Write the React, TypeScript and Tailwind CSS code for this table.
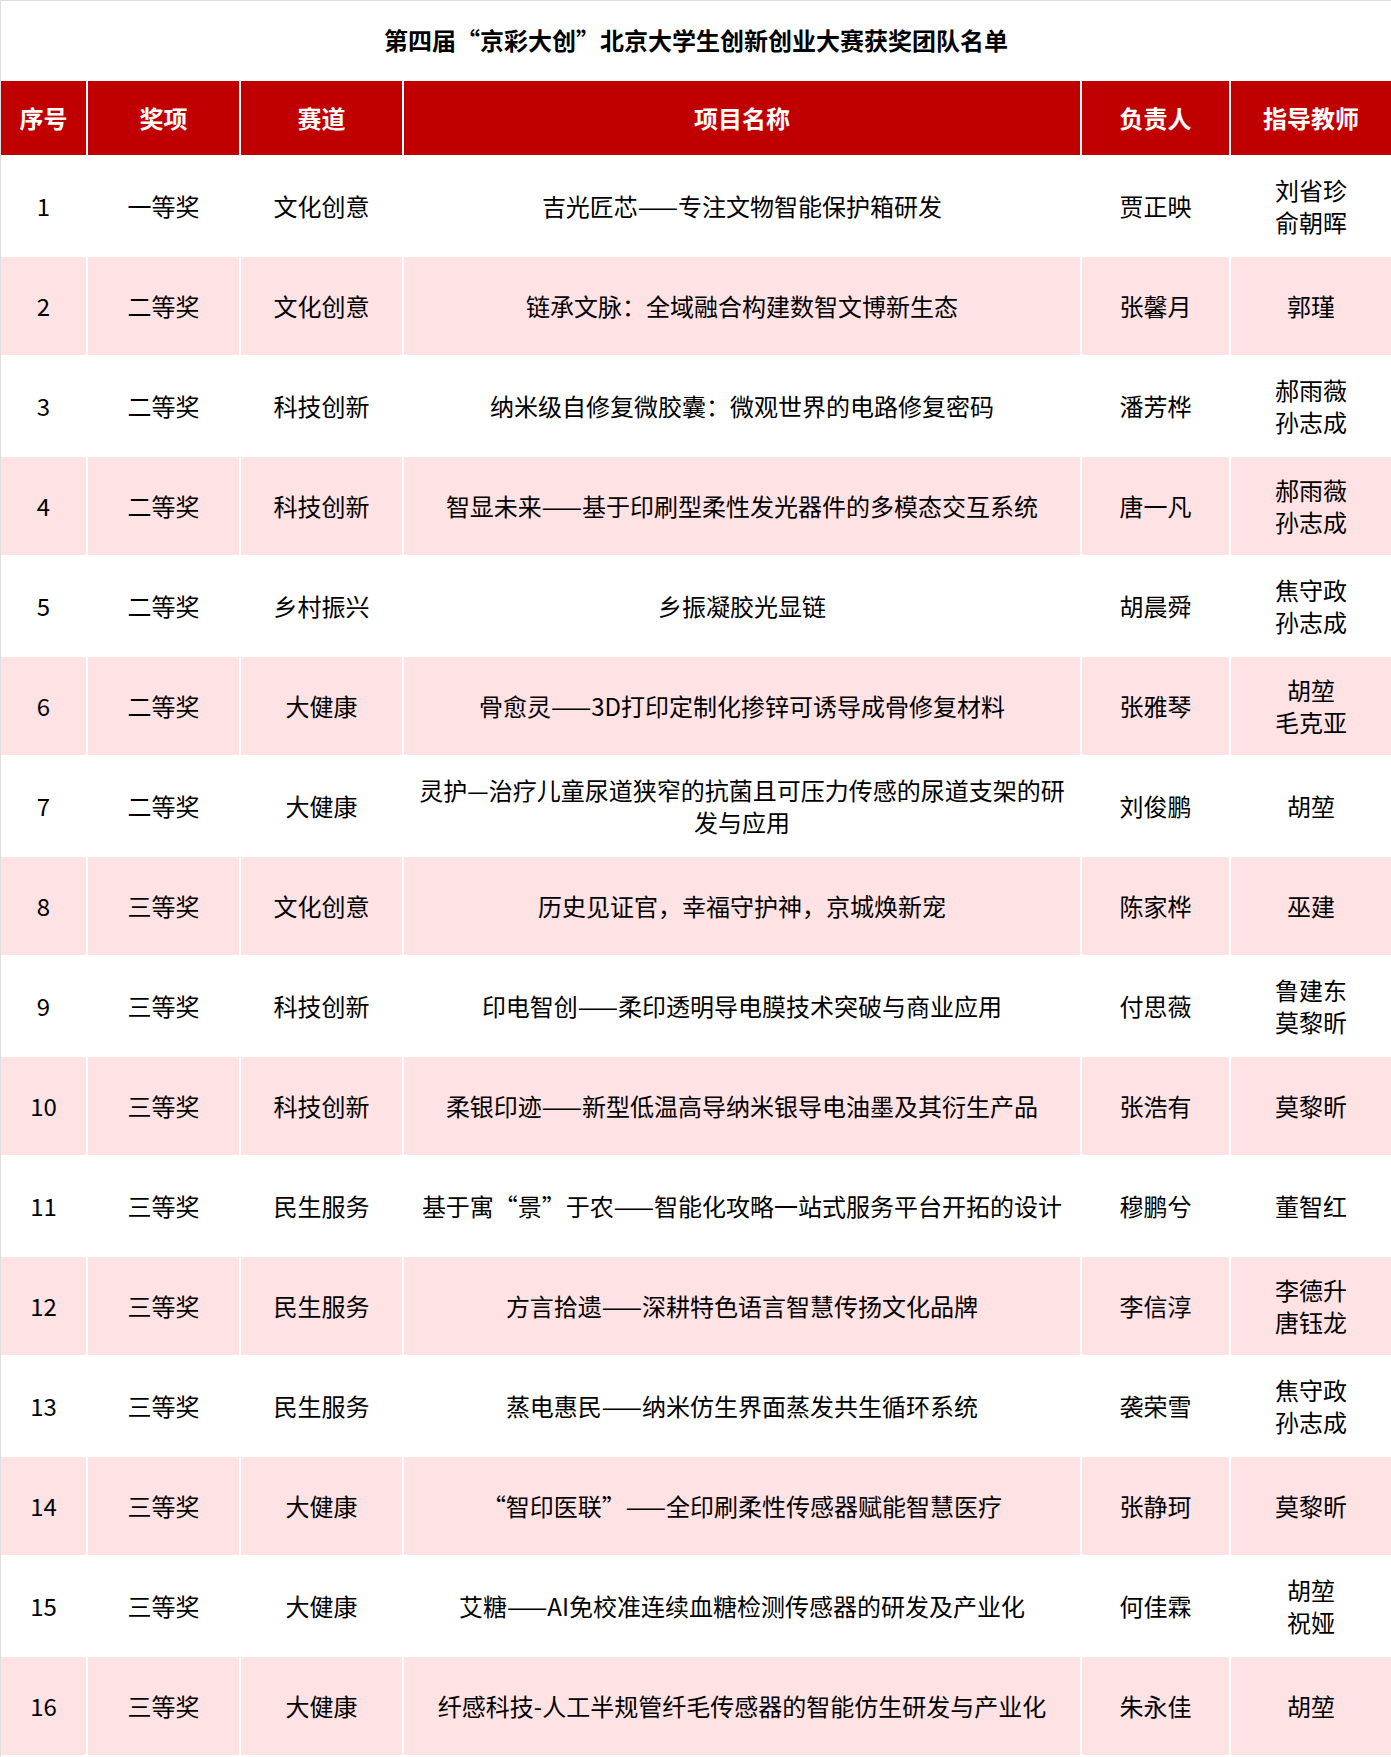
const rows: [string, string, string, string, string, string[]][] = [
  ['1', '一等奖', '文化创意', '吉光匠芯——专注文物智能保护箱研发', '贾正映', ['刘省珍', '俞朝晖']],
  ['2', '二等奖', '文化创意', '链承文脉：全域融合构建数智文博新生态', '张馨月', ['郭瑾']],
  ['3', '二等奖', '科技创新', '纳米级自修复微胶囊：微观世界的电路修复密码', '潘芳桦', ['郝雨薇', '孙志成']],
  ['4', '二等奖', '科技创新', '智显未来——基于印刷型柔性发光器件的多模态交互系统', '唐一凡', ['郝雨薇', '孙志成']],
  ['5', '二等奖', '乡村振兴', '乡振凝胶光显链', '胡晨舜', ['焦守政', '孙志成']],
  ['6', '二等奖', '大健康', '骨愈灵——3D打印定制化掺锌可诱导成骨修复材料', '张雅琴', ['胡堃', '毛克亚']],
  ['7', '二等奖', '大健康', '灵护—治疗儿童尿道狭窄的抗菌且可压力传感的尿道支架的研发与应用', '刘俊鹏', ['胡堃']],
  ['8', '三等奖', '文化创意', '历史见证官，幸福守护神，京城焕新宠', '陈家桦', ['巫建']],
  ['9', '三等奖', '科技创新', '印电智创——柔印透明导电膜技术突破与商业应用', '付思薇', ['鲁建东', '莫黎昕']],
  ['10', '三等奖', '科技创新', '柔银印迹——新型低温高导纳米银导电油墨及其衍生产品', '张浩有', ['莫黎昕']],
  ['11', '三等奖', '民生服务', '基于寓“景”于农——智能化攻略一站式服务平台开拓的设计', '穆鹏兮', ['董智红']],
  ['12', '三等奖', '民生服务', '方言拾遗——深耕特色语言智慧传扬文化品牌', '李信淳', ['李德升', '唐钰龙']],
  ['13', '三等奖', '民生服务', '蒸电惠民——纳米仿生界面蒸发共生循环系统', '袭荣雪', ['焦守政', '孙志成']],
  ['14', '三等奖', '大健康', '“智印医联”——全印刷柔性传感器赋能智慧医疗', '张静珂', ['莫黎昕']],
  ['15', '三等奖', '大健康', '艾糖——AI免校准连续血糖检测传感器的研发及产业化', '何佳霖', ['胡堃', '祝娅']],
  ['16', '三等奖', '大健康', '纤感科技-人工半规管纤毛传感器的智能仿生研发与产业化', '朱永佳', ['胡堃']],
];

const headers = ['序号', '奖项', '赛道', '项目名称', '负责人', '指导教师'];

export default function App() {
  return (
    <div
      className="w-[1391px] bg-white border-t border-l border-[#dedede] text-black text-[24px] leading-[32px]"
      style={{ fontFamily: '"Microsoft YaHei", "Noto Sans CJK SC", "Noto Sans", sans-serif' }}
    >
      <div className="h-[80px] pb-[2px] flex items-center justify-center font-bold text-[24px]">
        第四届“京彩大创”北京大学生创新创业大赛获奖团队名单
      </div>
      <div className="grid grid-cols-[85px_151px_161px_676px_147px_160px] gap-[2px] pb-[2px]">
        {headers.map((h) => (
          <div key={h} className="h-[74px] bg-[#c00000] text-white font-bold flex items-center justify-center">
            {h}
          </div>
        ))}
        {rows.map(([no, award, track, name, lead, tutors], i) => {
          const bg = i % 2 === 1 ? 'bg-[#ffe2e3]' : 'bg-white';
          const cell = `${bg} h-[98px] flex flex-col items-center justify-center text-center`;
          return [
            <div key={no + 'a'} className={cell}>{no}</div>,
            <div key={no + 'b'} className={cell}>{award}</div>,
            <div key={no + 'c'} className={cell}>{track}</div>,
            <div key={no + 'd'} className={`${cell} px-[10px]`}>{name}</div>,
            <div key={no + 'e'} className={cell}>{lead}</div>,
            <div key={no + 'f'} className={cell}>
              {tutors.map((t) => (
                <span key={t}>{t}</span>
              ))}
            </div>,
          ];
        })}
      </div>
    </div>
  );
}
